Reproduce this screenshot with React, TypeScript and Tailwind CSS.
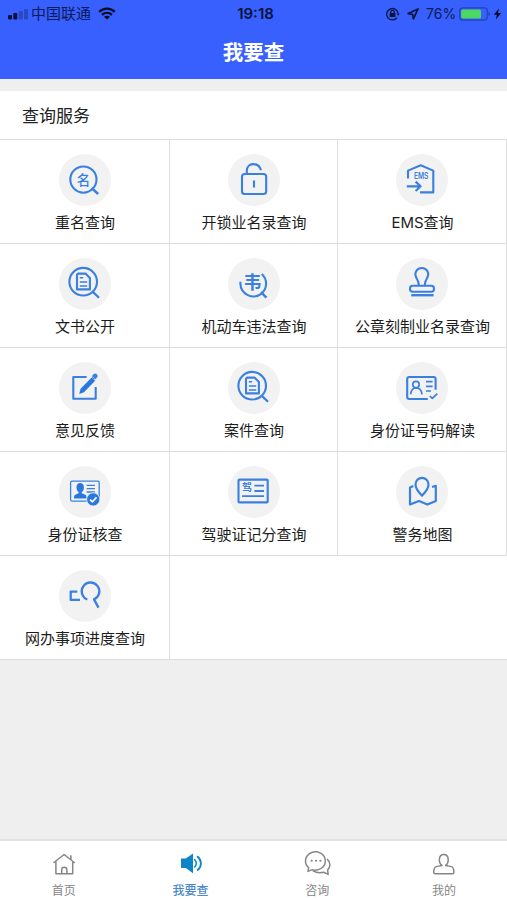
import type { ReactNode } from 'react'

const FONT = "font-['Inter','Noto_Sans_CJK_SC',sans-serif]"

function DocSearch() {
  return (
    <>
      <circle cx="24.2" cy="23.7" r="13.8" />
      <path d="M33.6 33.6 40 39.8" strokeWidth="2.2" />
      <path d="M19.2 15.6h7.3l4.4 4.4v11.4H18V16.8z" />
      <path d="M20.8 19.8h3.4M20.8 24h7.4M20.8 28h7.4" strokeWidth="1.6" />
    </>
  )
}

const services: { name: string; icon: ReactNode }[] = [
  {
    name: '重名查询',
    icon: (
      <>
        <circle cx="24.4" cy="25.6" r="13.1" />
        <path d="M32.6 34l6.600 6" strokeWidth="2.4" />
        <text x="24.4" y="30.6" fontSize="13.5" fontWeight="500" textAnchor="middle" fill="#3a80e0" stroke="none">名</text>
      </>
    ),
  },
  {
    name: '开锁业名录查询',
    icon: (
      <>
        <rect x="14" y="20" width="24.2" height="20" rx="2.8" />
        <path d="M18.8 20v-3.2c0-8.600 11.600-9 14.200-.6M26 26.4v7" />
      </>
    ),
  },
  {
    name: 'EMS查询',
    icon: (
      <>
        <path d="M12 24.6v-8L24.7 11.3l12.6 5.3v21.8H24" />
        <path d="M10.8 32.3h13.4M19.6 27.6l5 4.7-5 4.7" strokeWidth="2.200" />
        <text x="25.200" y="24.8" fontSize="9.400" fontWeight="600" textAnchor="middle" textLength="14.400" lengthAdjust="spacingAndGlyphs" fill="#3a80e0" stroke="none">EMS</text>
      </>
    ),
  },
  { name: '文书公开', icon: <DocSearch /> },
  {
    name: '机动车违法查询',
    icon: (
      <>
        <path d="M12.400 23.800v2A13 13 0 0 0 33.200 35.800a13 13 0 0 0 .6-19.800" />
        <path d="M33 34.200l5.400 5.400" strokeWidth="2.4" />
        <text x="24.500" y="31.200" fontSize="18" fontWeight="700" textAnchor="middle" fill="#3a80e0" stroke="none">韦</text>
      </>
    ),
  },
  {
    name: '公章刻制业名录查询',
    icon: (
      <>
        <path d="M22.800 27.600c.2-3.600-.6-4.800-2-7C17.500 15.200 20.600 10 25.800 10s8.300 5.200 5 10.600c-1.400 2.200-2.200 3.400-2 7" />
        <rect x="14" y="27.800" width="24" height="5.900" rx="2.600" />
        <path d="M15.200 37.200h22.400" strokeWidth="2.400" />
      </>
    ),
  },
  {
    name: '意见反馈',
    icon: (
      <>
        <path d="M27.600 15H14.300v21.800h22.400V25" />
        <path d="M20.200 32l1.400-5.200L32.600 15.400l3.500 3.400L25 30.200z" fill="#2878e0" stroke="none" />
        <path d="M35.400 14.800l.8-.8" strokeWidth="4.800" strokeLinecap="round" />
        <path d="M32.800 13.800l4 4" stroke="#a9c8f2" strokeWidth=".6" />
      </>
    ),
  },
  { name: '案件查询', icon: <DocSearch /> },
  {
    name: '身份证号码解读',
    icon: (
      <>
        <path d="M39.600 27.800V17a2 2 0 0 0-2-2H13.200a2 2 0 0 0-2 2v18a2 2 0 0 0 2 2h18.600" />
        <path d="M33.800 34l2.500 2.400 5-4.800" strokeWidth="1.700" />
        <circle cx="20" cy="22.600" r="3.200" strokeWidth="1.700" />
        <path d="M14.600 32.400c.6-8.800 10.600-8.800 11.400 0M30 19.600h6.600M30 24.300h6.600M30 29h5" strokeWidth="1.700" />
      </>
    ),
  },
  {
    name: '身份证核查',
    icon: (
      <>
        <rect x="11.600" y="15.200" width="28.600" height="20" rx="1.500" strokeWidth="1.300" />
        <g fill="#2878e0" stroke="none">
          <ellipse cx="21.200" cy="21.600" rx="3.700" ry="4.500" />
          <path d="M19.600 24h3.200v3.200l3.600 1.600c1 .6 1.200 2 1.200 3.600H15c0-1.600.2-3 1.200-3.600l3.400-1.600z" />
        </g>
        <path d="M27.600 19.400h8.400M27.600 22.700h8.400M27.600 26h8.400" strokeWidth="1.300" />
        <circle cx="34.200" cy="33.400" r="6.600" fill="#2878e0" stroke="#f2f2f2" strokeWidth=".8" />
        <path d="M31 33.600l2.500 2.200 4-4.400" stroke="#fff" strokeWidth="1.600" />
      </>
    ),
  },
  {
    name: '驾驶证记分查询',
    icon: (
      <>
        <rect x="10.500" y="13.600" width="29.200" height="22.800" rx="1" />
        <text x="18.900" y="25.200" fontSize="10" fontWeight="700" textAnchor="middle" fill="#3a80e0" stroke="none">驾</text>
        <path d="M26.400 19.600H36M26.400 25H36M14 30.200h22" strokeWidth="1.800" />
      </>
    ),
  },
  {
    name: '警务地图',
    icon: (
      <>
        <path d="M26 29.600c-3.400-3.400-6.500-7.400-6.500-11.200a6.500 6.500 0 0 1 13 0c0 3.800-3.100 7.800-6.500 11.200z" strokeWidth="2.200" />
        <path d="M17.400 20l-3.400 1.400v17.200l9-3.600 8.400 3.600 8.400-3.600V19.800l-3.800 1.200" strokeWidth="2.200" />
      </>
    ),
  },
  {
    name: '网办事项进度查询',
    icon: (
      <path d="M18.300 21.700h-6.600v8.200H21M28.300 29.500a8.800 8.800 0 1 1 6.700-.1l4.500 8.200" strokeWidth="2.300" />
    ),
  },
]

const tabs: { name: string; icon: ReactNode; active?: boolean }[] = [
  {
    name: '首页',
    icon: <path d="M5 14.500 15.100 6.500 25.300 14.500M6.900 13.300v12.500h16.800V13.300M21.900 11.600V7.800M12.700 25.800v-4a2.600 2.600 0 0 1 5.200 0v4" />,
  },
  {
    name: '我要查',
    active: true,
    icon: (
      <>
        <path d="M5 10.500h4.800L17 5.400v19.800l-7.200-5.200H5z" fill="#0b84c8" stroke="none" />
        <path d="M18.600 11.600c2.300 2 2.300 5.400 0 7.400" strokeWidth="1.500" />
        <path d="M21.600 8.800c4.400 3.600 4.400 9.600 0 13.200" strokeWidth="1.800" />
      </>
    ),
  },
  {
    name: '咨询',
    icon: (
      <>
        <path d="M6.600 19.600A9.900 9.100 0 1 1 10.200 21.600L6 23.400z" />
        <path d="M25.400 11.400c3.400 2.800 3.200 7.800.2 10.600l.6 4.400-4.600-2.200c-3.400.8-7.600.4-10.400-1.400" />
        <path d="M9.600 12.700h.1M14 12.700h.1M18.400 12.700h.1" strokeWidth="2.100" />
      </>
    ),
  },
  {
    name: '我的',
    icon: (
      <>
        <path d="M12.800 17.400c-3.600-3-3.400-10.800 2-10.800s5.600 7.800 2 10.800" />
        <path d="M12.800 17.400c-1.400.8-3.600.6-5.600 1.200-2 .6-2.500 2.600-2.500 6 0 .8.600 1.200 1.400 1.200h17.400c.8 0 1.400-.4 1.400-1.200 0-3.400-.5-5.400-2.500-6-2-.6-4.200-.4-5.600-1.200" />
      </>
    ),
  },
]

function StatusBar() {
  return (
    <div className="grid h-[27px] grid-cols-[1fr_auto_1fr] items-center pl-2 pr-[5px] text-[#0b1b55]">
      <div className="flex items-center">
        <svg className="h-3 w-5" viewBox="0 0 20 12">
          <g fill="#0a1238">
            <rect x="0" y="7" width="4" height="4.500" rx="1" />
            <rect x="5.300" y="5" width="4" height="6.500" rx="1" />
          </g>
          <g fill="#2849c2">
            <rect x="10.700" y="3" width="4" height="8.500" rx="1" />
            <rect x="16" y="1" width="4" height="10.500" rx="1" />
          </g>
        </svg>
        <span className="ml-[3px] text-[15px] leading-none">中国联通</span>
        <svg className="ml-[7px] h-[13px] w-[18px]" viewBox="0 0 18 13" fill="none" stroke="#060b24" strokeWidth="2.300">
          <path d="M1.200 4.900c4.400-4.400 11.200-4.400 15.600 0M4 7.900c2.900-2.700 7.100-2.700 10 0" />
          <path d="M9 12.600 6 9.800c1.800-1.500 4.200-1.500 6 0z" fill="#060b24" stroke="none" />
        </svg>
      </div>
      <span className="pl-px text-[15px] leading-none font-semibold text-[#08133c]">19:18</span>
      <div className="flex items-center justify-end">
        <svg className="h-3.5 w-3.5" viewBox="0 0 14 14" fill="none" stroke="#0a1540" strokeWidth="1.300">
          <path d="M11 10.600a5.700 5.700 0 1 1 1-4.400" />
          <path d="M10.400 6.400h3.400l-1.600 2.400z" fill="#0a1540" stroke="none" />
          <rect x="3.600" y="6" width="5.800" height="4" fill="#0a1540" stroke="none" />
          <path d="M4.800 6.400V5a1.700 1.700 0 0 1 3.400 0v1.400" />
        </svg>
        <svg className="mr-px ml-[7px] h-3 w-3" viewBox="0 0 12 12" fill="none" stroke="#0a1540" strokeWidth="1.700" strokeLinejoin="round">
          <path d="M11 1 1.200 5.600l4.500.7.700 4.500z" />
        </svg>
        <span className="ml-[6px] w-[30px] pt-px text-[14px] leading-none whitespace-nowrap">76%</span>
        <svg className="ml-[3px] h-3.5 w-8" viewBox="0 0 32 14">
          <rect x=".7" y=".9" width="27.600" height="12.200" rx="3" fill="none" stroke="#2443b4" strokeWidth="1.200" />
          <rect x="2.200" y="2.400" width="19.800" height="9.200" rx="1.500" fill="#4bd964" />
          <path d="M29.500 4.800c2 .6 2 3.800 0 4.400z" fill="#2443b4" />
        </svg>
        <svg className="ml-[2px] h-3 w-[9px]" viewBox="0 0 9 12" fill="#060b24">
          <path d="M6 .5.800 6.800h3.100L2.800 11.500 8.200 5H5z" />
        </svg>
      </div>
    </div>
  )
}

export default function App() {
  return (
    <div className={`flex h-[900px] w-[507px] flex-col overflow-hidden bg-[#efefef] ${FONT}`}>
      <header className="h-[79px] bg-[#3860ff]">
        <StatusBar />
        <h1 className="mt-[11px] text-center text-[20.500px] leading-[30px] font-bold text-white">我要查</h1>
      </header>

      <main className="mt-3 flex-1">
        <h2 className="h-12 bg-white pl-[22px] text-[17px] leading-[51px] text-[#222]">查询服务</h2>
        <div className="grid grid-cols-[170px_168px_169px] border-t border-[#dedede] bg-white">
          {services.map(s => (
            <div
              key={s.name}
              className="flex h-[104px] flex-col items-center border-r border-b border-[#dedede] pt-[14px]"
            >
              <div className="h-[52px] w-[52px] rounded-full bg-[#f2f2f2]">
                <svg className="h-full w-full" viewBox="0 0 52 52" fill="none" stroke="#3a80e0" strokeWidth="2.100" strokeLinejoin="round">
                  {s.icon}
                </svg>
              </div>
              <span className="mt-1.5 pl-px text-[15px] leading-[22px] whitespace-nowrap text-[#1c1c1c]">{s.name}</span>
            </div>
          ))}
          <div className="col-span-2 border-b border-[#dedede]" />
        </div>
      </main>

      <nav className="grid h-[61px] grid-cols-4 border-t-2 border-[#e2e2e2] bg-white">
        {tabs.map(t => (
          <div
            key={t.name}
            className={`flex flex-col items-center pt-[7px] pl-px ${t.active ? 'font-medium text-[#4a88c8]' : 'text-[#868686]'}`}
          >
            <svg
              className="h-[30px] w-[30px]"
              viewBox="0 0 30 30"
              fill="none"
              stroke={t.active ? '#0b84c8' : '#868686'}
              strokeWidth="1.500"
              strokeLinecap="round"
              strokeLinejoin="round"
            >
              {t.icon}
            </svg>
            <span className="mt-1 text-[12px] leading-[18px]">{t.name}</span>
          </div>
        ))}
      </nav>
    </div>
  )
}
